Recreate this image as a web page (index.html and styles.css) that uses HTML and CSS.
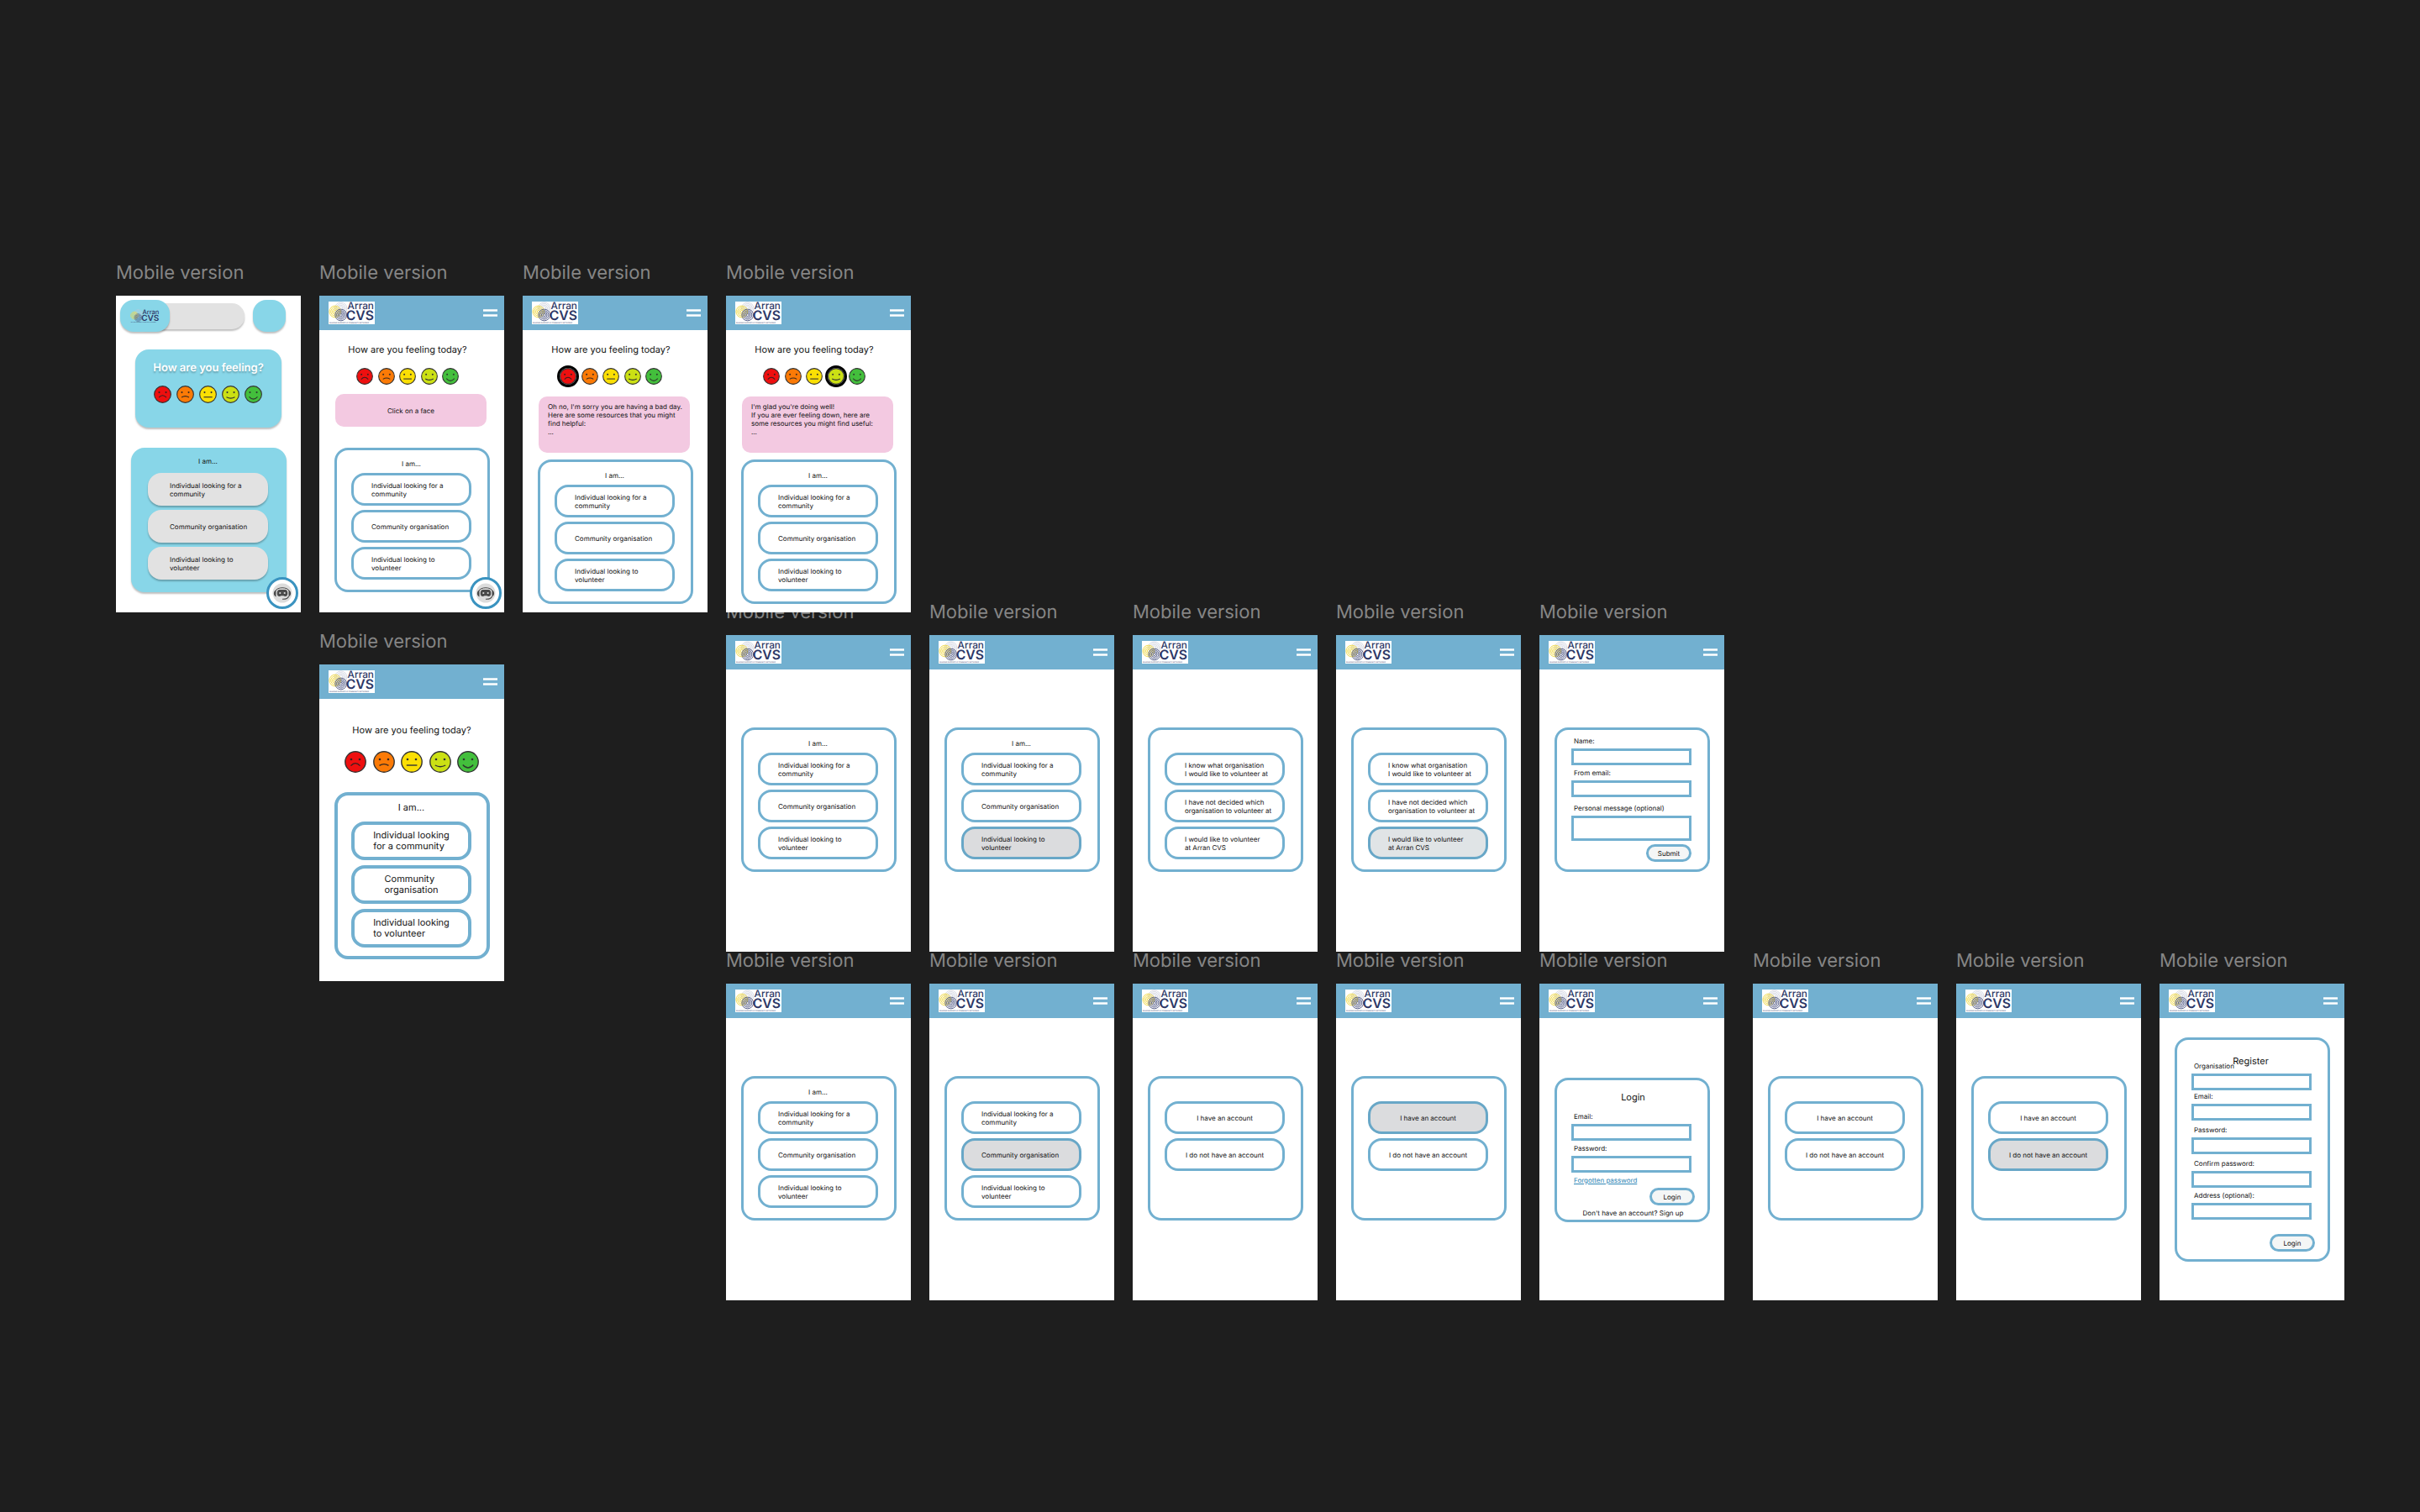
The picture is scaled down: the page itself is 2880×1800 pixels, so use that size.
FILE: index.html
```html
<!DOCTYPE html>
<html lang="en">
<head>
<meta charset="utf-8">
<meta name="viewport" content="width=device-width, initial-scale=1">
<title>Arran CVS – mobile version boards</title>
<link rel="stylesheet" href="styles.css">
</head>
<body>
<svg class="sprite" aria-hidden="true">
  <symbol id="logo" viewBox="0 0 56 27">
    <g fill="none" stroke="#c3c8d8" stroke-width="0.7">
      <circle cx="15" cy="8" r="7.3"/><circle cx="15" cy="8" r="5.6"/><circle cx="15" cy="8" r="3.9"/><circle cx="15" cy="8" r="2.2"/>
    </g>
    <g fill="none" stroke="#f0d94a" stroke-width="1">
      <circle cx="8" cy="12" r="7"/><circle cx="8" cy="12" r="5.2"/><circle cx="8" cy="12" r="3.4"/><circle cx="8" cy="12" r="1.6"/>
    </g>
    <g fill="none" stroke="#47507f" stroke-width="0.9">
      <circle cx="15" cy="16" r="7"/><circle cx="15" cy="16" r="5.2"/><circle cx="15" cy="16" r="3.4"/><circle cx="15" cy="16" r="1.6"/>
    </g>
    <text class="logo-top" x="23" y="9">Arran</text>
    <text class="logo-main" x="21" y="22">CVS</text>
    <text class="logo-tag" x="1" y="26">BUILDING SUPPORTIVE COMMUNITY NETWORKS</text>
  </symbol>
  <symbol id="menu" viewBox="0 0 17 9">
    <path d="M0 1.5H17M0 7.5H17" stroke="#fff" stroke-width="2.6"/>
  </symbol>
  <g id="eyes"><circle cx="8" cy="10" r="1.3"/><circle cx="18" cy="10" r="1.3"/></g>
  <symbol id="face-1" viewBox="0 0 26 26">
    <circle cx="13" cy="13" r="12.2" fill="#ee0f0f" stroke="#333" stroke-width="1.4"/><use href="#eyes" fill="#3a2020"/>
    <path d="M7.5 17.6Q13 11.6 18.5 17.6" fill="none" stroke="#3a2020" stroke-width="1.4"/>
  </symbol>
  <symbol id="face-2" viewBox="0 0 26 26">
    <circle cx="13" cy="13" r="12.2" fill="#fb7a06" stroke="#333" stroke-width="1.4"/><use href="#eyes" fill="#3a2a20"/>
    <path d="M7.5 17.4Q13 13.8 18.5 17.4" fill="none" stroke="#3a2a20" stroke-width="1.4"/>
  </symbol>
  <symbol id="face-3" viewBox="0 0 26 26">
    <circle cx="13" cy="13" r="12.2" fill="#fbdf04" stroke="#333" stroke-width="1.4"/><use href="#eyes" fill="#333"/>
    <path d="M6.8 17H19.4" fill="none" stroke="#333" stroke-width="1.4"/>
  </symbol>
  <symbol id="face-4" viewBox="0 0 26 26">
    <circle cx="13" cy="13" r="12.2" fill="#cbe014" stroke="#333" stroke-width="1.4"/><use href="#eyes" fill="#333"/>
    <path d="M6.8 17Q13 20.4 19.2 17" fill="none" stroke="#333" stroke-width="1.4"/>
  </symbol>
  <symbol id="face-5" viewBox="0 0 26 26">
    <circle cx="13" cy="13" r="12.2" fill="#43bf3c" stroke="#333" stroke-width="1.4"/><use href="#eyes" fill="#2c3a2c"/>
    <path d="M6.8 16.5Q13 23.5 19.2 16.5" fill="none" stroke="#2c3a2c" stroke-width="1.4"/>
  </symbol>
  <symbol id="bot" viewBox="0 0 24 24">
    <circle cx="12" cy="12" r="11.5" fill="#dcdcdc"/>
    <path d="M4 9.5C5.5 4.5 18.5 4.5 20 9.5" fill="none" stroke="#4a4a4a" stroke-width="1"/>
    <path d="M4.5 8.6V16.4C1 15.5 1 9.5 4.5 8.6ZM19.5 8.6V16.4C23 15.5 23 9.5 19.5 8.6Z" fill="#4a4a4a"/>
    <path d="M8.5 8H15.5Q18 8 18.3 12Q18.3 16 15.5 16Q14 16 13.5 15.2H10.5Q10 16 8.5 16Q5.7 16 5.7 12Q6 8 8.5 8Z" fill="#4a4a4a"/>
    <circle cx="9.3" cy="12" r="1.1" fill="#dcdcdc"/><circle cx="14.7" cy="12" r="1.1" fill="#dcdcdc"/>
    <path d="M19.5 16Q18.5 19.5 12 19.3" fill="none" stroke="#4a4a4a" stroke-width="1.1"/>
  </symbol>
</svg>

<main class="canvas">

  <article class="board row-1 col-1">
    <h2 class="board-name">Mobile version</h2>
    <div class="screen screen-draft">
      <header class="draft-bar">
        <button class="draft-logo" type="button" aria-label="Arran CVS home"><svg class="logo-small"><use href="#logo"/></svg></button>
        <div class="draft-search"></div>
        <button class="draft-menu" type="button" aria-label="Menu"></button>
      </header>
      <section class="draft-mood">
        <h3 class="draft-title">How are you feeling?</h3>
        <div class="faces faces-draft">
          <button class="face" type="button" aria-label="Very sad"><svg><use href="#face-1"/></svg></button>
          <button class="face" type="button" aria-label="Sad"><svg><use href="#face-2"/></svg></button>
          <button class="face" type="button" aria-label="Neutral"><svg><use href="#face-3"/></svg></button>
          <button class="face" type="button" aria-label="Happy"><svg><use href="#face-4"/></svg></button>
          <button class="face" type="button" aria-label="Very happy"><svg><use href="#face-5"/></svg></button>
        </div>
      </section>
      <section class="card card-draft">
        <p class="card-lead">I am...</p>
        <button class="choice" type="button">Individual looking for a<br>community</button>
        <button class="choice" type="button">Community organisation</button>
        <button class="choice" type="button">Individual looking to<br>volunteer</button>
      </section>
      <button class="chat" type="button" aria-label="Chat assistant"><svg><use href="#bot"/></svg></button>
    </div>
  </article>

  <article class="board row-1 col-2">
    <h2 class="board-name">Mobile version</h2>
    <div class="screen">
      <header class="bar"><svg class="logo" role="img" aria-label="Arran CVS"><use href="#logo"/></svg><button class="menu" type="button" aria-label="Menu"><svg><use href="#menu"/></svg></button></header>
      <h3 class="question">How are you feeling today?</h3>
      <div class="faces">
        <button class="face" type="button" aria-label="Very sad"><svg><use href="#face-1"/></svg></button>
        <button class="face" type="button" aria-label="Sad"><svg><use href="#face-2"/></svg></button>
        <button class="face" type="button" aria-label="Neutral"><svg><use href="#face-3"/></svg></button>
        <button class="face" type="button" aria-label="Happy"><svg><use href="#face-4"/></svg></button>
        <button class="face" type="button" aria-label="Very happy"><svg><use href="#face-5"/></svg></button>
      </div>
      <p class="note note-hint">Click on a face</p>
      <section class="card card-hint">
        <p class="card-lead">I am...</p>
        <button class="choice" type="button">Individual looking for a<br>community</button>
        <button class="choice" type="button">Community organisation</button>
        <button class="choice" type="button">Individual looking to<br>volunteer</button>
      </section>
      <button class="chat" type="button" aria-label="Chat assistant"><svg><use href="#bot"/></svg></button>
    </div>
  </article>

  <article class="board row-1 col-3">
    <h2 class="board-name">Mobile version</h2>
    <div class="screen">
      <header class="bar"><svg class="logo" role="img" aria-label="Arran CVS"><use href="#logo"/></svg><button class="menu" type="button" aria-label="Menu"><svg><use href="#menu"/></svg></button></header>
      <h3 class="question">How are you feeling today?</h3>
      <div class="faces">
        <button class="face face-picked" type="button" aria-label="Very sad"><svg><use href="#face-1"/></svg></button>
        <button class="face" type="button" aria-label="Sad"><svg><use href="#face-2"/></svg></button>
        <button class="face" type="button" aria-label="Neutral"><svg><use href="#face-3"/></svg></button>
        <button class="face" type="button" aria-label="Happy"><svg><use href="#face-4"/></svg></button>
        <button class="face" type="button" aria-label="Very happy"><svg><use href="#face-5"/></svg></button>
      </div>
      <p class="note">Oh no, I'm sorry you are having a bad day.<br>Here are some resources that you might<br>find helpful:<br>...</p>
      <section class="card card-reply">
        <p class="card-lead">I am...</p>
        <button class="choice" type="button">Individual looking for a<br>community</button>
        <button class="choice" type="button">Community organisation</button>
        <button class="choice" type="button">Individual looking to<br>volunteer</button>
      </section>
    </div>
  </article>

  <article class="board row-1 col-4">
    <h2 class="board-name">Mobile version</h2>
    <div class="screen">
      <header class="bar"><svg class="logo" role="img" aria-label="Arran CVS"><use href="#logo"/></svg><button class="menu" type="button" aria-label="Menu"><svg><use href="#menu"/></svg></button></header>
      <h3 class="question">How are you feeling today?</h3>
      <div class="faces">
        <button class="face" type="button" aria-label="Very sad"><svg><use href="#face-1"/></svg></button>
        <button class="face" type="button" aria-label="Sad"><svg><use href="#face-2"/></svg></button>
        <button class="face" type="button" aria-label="Neutral"><svg><use href="#face-3"/></svg></button>
        <button class="face face-picked" type="button" aria-label="Happy"><svg><use href="#face-4"/></svg></button>
        <button class="face" type="button" aria-label="Very happy"><svg><use href="#face-5"/></svg></button>
      </div>
      <p class="note">I'm glad you're doing well!<br>If you are ever feeling down, here are<br>some resources you might find useful:<br>...</p>
      <section class="card card-reply">
        <p class="card-lead">I am...</p>
        <button class="choice" type="button">Individual looking for a<br>community</button>
        <button class="choice" type="button">Community organisation</button>
        <button class="choice" type="button">Individual looking to<br>volunteer</button>
      </section>
    </div>
  </article>

  <article class="board row-2 col-2">
    <h2 class="board-name">Mobile version</h2>
    <div class="screen screen-large">
      <header class="bar"><svg class="logo" role="img" aria-label="Arran CVS"><use href="#logo"/></svg><button class="menu" type="button" aria-label="Menu"><svg><use href="#menu"/></svg></button></header>
      <h3 class="question">How are you feeling today?</h3>
      <div class="faces">
        <button class="face" type="button" aria-label="Very sad"><svg><use href="#face-1"/></svg></button>
        <button class="face" type="button" aria-label="Sad"><svg><use href="#face-2"/></svg></button>
        <button class="face" type="button" aria-label="Neutral"><svg><use href="#face-3"/></svg></button>
        <button class="face" type="button" aria-label="Happy"><svg><use href="#face-4"/></svg></button>
        <button class="face" type="button" aria-label="Very happy"><svg><use href="#face-5"/></svg></button>
      </div>
      <section class="card">
        <p class="card-lead">I am...</p>
        <button class="choice" type="button">Individual looking<br>for a community</button>
        <button class="choice" type="button">Community<br>organisation</button>
        <button class="choice" type="button">Individual looking<br>to volunteer</button>
      </section>
    </div>
  </article>

  <article class="board row-3 col-4">
    <h2 class="board-name">Mobile version</h2>
    <div class="screen">
      <header class="bar"><svg class="logo" role="img" aria-label="Arran CVS"><use href="#logo"/></svg><button class="menu" type="button" aria-label="Menu"><svg><use href="#menu"/></svg></button></header>
      <section class="card card-step">
        <p class="card-lead">I am...</p>
        <button class="choice" type="button">Individual looking for a<br>community</button>
        <button class="choice" type="button">Community organisation</button>
        <button class="choice" type="button">Individual looking to<br>volunteer</button>
      </section>
    </div>
  </article>

  <article class="board row-3 col-5">
    <h2 class="board-name">Mobile version</h2>
    <div class="screen">
      <header class="bar"><svg class="logo" role="img" aria-label="Arran CVS"><use href="#logo"/></svg><button class="menu" type="button" aria-label="Menu"><svg><use href="#menu"/></svg></button></header>
      <section class="card card-step">
        <p class="card-lead">I am...</p>
        <button class="choice" type="button">Individual looking for a<br>community</button>
        <button class="choice" type="button">Community organisation</button>
        <button class="choice choice-picked" type="button">Individual looking to<br>volunteer</button>
      </section>
    </div>
  </article>

  <article class="board row-3 col-6">
    <h2 class="board-name">Mobile version</h2>
    <div class="screen">
      <header class="bar"><svg class="logo" role="img" aria-label="Arran CVS"><use href="#logo"/></svg><button class="menu" type="button" aria-label="Menu"><svg><use href="#menu"/></svg></button></header>
      <section class="card card-step">
        <p class="card-lead"></p>
        <button class="choice" type="button">I know what organisation<br>I would like to volunteer at</button>
        <button class="choice" type="button">I have not decided which<br>organisation to volunteer at</button>
        <button class="choice" type="button">I would like to volunteer<br>at Arran CVS</button>
      </section>
    </div>
  </article>

  <article class="board row-3 col-7">
    <h2 class="board-name">Mobile version</h2>
    <div class="screen">
      <header class="bar"><svg class="logo" role="img" aria-label="Arran CVS"><use href="#logo"/></svg><button class="menu" type="button" aria-label="Menu"><svg><use href="#menu"/></svg></button></header>
      <section class="card card-step">
        <p class="card-lead"></p>
        <button class="choice" type="button">I know what organisation<br>I would like to volunteer at</button>
        <button class="choice" type="button">I have not decided which<br>organisation to volunteer at</button>
        <button class="choice choice-hover" type="button">I would like to volunteer<br>at Arran CVS</button>
      </section>
    </div>
  </article>

  <article class="board row-3 col-8">
    <h2 class="board-name">Mobile version</h2>
    <div class="screen">
      <header class="bar"><svg class="logo" role="img" aria-label="Arran CVS"><use href="#logo"/></svg><button class="menu" type="button" aria-label="Menu"><svg><use href="#menu"/></svg></button></header>
      <form class="card card-step form form-message">
        <div class="field"><label for="msg-name">Name:</label><input id="msg-name" type="text"></div>
        <div class="field"><label for="msg-email">From email:</label><input id="msg-email" type="email"></div>
        <div class="field field-apart"><label for="msg-text">Personal message (optional)</label><textarea id="msg-text"></textarea></div>
        <button class="submit" type="button">Submit</button>
      </form>
    </div>
  </article>

  <article class="board row-4 col-4">
    <h2 class="board-name">Mobile version</h2>
    <div class="screen">
      <header class="bar"><svg class="logo" role="img" aria-label="Arran CVS"><use href="#logo"/></svg><button class="menu" type="button" aria-label="Menu"><svg><use href="#menu"/></svg></button></header>
      <section class="card card-step">
        <p class="card-lead">I am...</p>
        <button class="choice" type="button">Individual looking for a<br>community</button>
        <button class="choice" type="button">Community organisation</button>
        <button class="choice" type="button">Individual looking to<br>volunteer</button>
      </section>
    </div>
  </article>

  <article class="board row-4 col-5">
    <h2 class="board-name">Mobile version</h2>
    <div class="screen">
      <header class="bar"><svg class="logo" role="img" aria-label="Arran CVS"><use href="#logo"/></svg><button class="menu" type="button" aria-label="Menu"><svg><use href="#menu"/></svg></button></header>
      <section class="card card-step">
        <p class="card-lead"></p>
        <button class="choice" type="button">Individual looking for a<br>community</button>
        <button class="choice choice-picked" type="button">Community organisation</button>
        <button class="choice" type="button">Individual looking to<br>volunteer</button>
      </section>
    </div>
  </article>

  <article class="board row-4 col-6">
    <h2 class="board-name">Mobile version</h2>
    <div class="screen">
      <header class="bar"><svg class="logo" role="img" aria-label="Arran CVS"><use href="#logo"/></svg><button class="menu" type="button" aria-label="Menu"><svg><use href="#menu"/></svg></button></header>
      <section class="card card-step">
        <p class="card-lead"></p>
        <button class="choice choice-center" type="button">I have an account</button>
        <button class="choice choice-center" type="button">I do not have an account</button>
      </section>
    </div>
  </article>

  <article class="board row-4 col-7">
    <h2 class="board-name">Mobile version</h2>
    <div class="screen">
      <header class="bar"><svg class="logo" role="img" aria-label="Arran CVS"><use href="#logo"/></svg><button class="menu" type="button" aria-label="Menu"><svg><use href="#menu"/></svg></button></header>
      <section class="card card-step">
        <p class="card-lead"></p>
        <button class="choice choice-center choice-picked" type="button">I have an account</button>
        <button class="choice choice-center" type="button">I do not have an account</button>
      </section>
    </div>
  </article>

  <article class="board row-4 col-8">
    <h2 class="board-name">Mobile version</h2>
    <div class="screen">
      <header class="bar"><svg class="logo" role="img" aria-label="Arran CVS"><use href="#logo"/></svg><button class="menu" type="button" aria-label="Menu"><svg><use href="#menu"/></svg></button></header>
      <form class="card form form-login">
        <h3 class="form-title">Login</h3>
        <div class="field"><label for="login-email">Email:</label><input id="login-email" type="email"></div>
        <div class="field"><label for="login-pass">Password:</label><input id="login-pass" type="password"></div>
        <a class="forgot" href="#forgotten">Forgotten password</a>
        <button class="submit" type="button">Login</button>
        <p class="signup">Don't have an account? <a href="#register">Sign up</a></p>
      </form>
    </div>
  </article>

  <article class="board row-4 col-9">
    <h2 class="board-name">Mobile version</h2>
    <div class="screen">
      <header class="bar"><svg class="logo" role="img" aria-label="Arran CVS"><use href="#logo"/></svg><button class="menu" type="button" aria-label="Menu"><svg><use href="#menu"/></svg></button></header>
      <section class="card card-step">
        <p class="card-lead"></p>
        <button class="choice choice-center" type="button">I have an account</button>
        <button class="choice choice-center" type="button">I do not have an account</button>
      </section>
    </div>
  </article>

  <article class="board row-4 col-10">
    <h2 class="board-name">Mobile version</h2>
    <div class="screen">
      <header class="bar"><svg class="logo" role="img" aria-label="Arran CVS"><use href="#logo"/></svg><button class="menu" type="button" aria-label="Menu"><svg><use href="#menu"/></svg></button></header>
      <section class="card card-step">
        <p class="card-lead"></p>
        <button class="choice choice-center" type="button">I have an account</button>
        <button class="choice choice-center choice-picked" type="button">I do not have an account</button>
      </section>
    </div>
  </article>

  <article class="board row-4 col-11">
    <h2 class="board-name">Mobile version</h2>
    <div class="screen">
      <header class="bar"><svg class="logo" role="img" aria-label="Arran CVS"><use href="#logo"/></svg><button class="menu" type="button" aria-label="Menu"><svg><use href="#menu"/></svg></button></header>
      <form class="card form form-register">
        <h3 class="form-title">Register</h3>
        <div class="field"><label for="reg-org">Organisation</label><input id="reg-org" type="text"></div>
        <div class="field field-near"><label for="reg-email">Email:</label><input id="reg-email" type="email"></div>
        <div class="field field-apart"><label for="reg-pass">Password:</label><input id="reg-pass" type="password"></div>
        <div class="field field-apart"><label for="reg-confirm">Confirm password:</label><input id="reg-confirm" type="password"></div>
        <div class="field"><label for="reg-address">Address (optional):</label><input id="reg-address" type="text"></div>
        <button class="submit" type="button">Login</button>
      </form>
    </div>
  </article>

</main>
</body>
</html>
```
FILE: styles.css
```css
:root {
  --blue: #72b0d0;
  --cyan: #88d6e8;
  --pink: #f3c9e1;
  --grey: #e2e2e2;
  --ink: #111;
}

* { box-sizing: border-box; }

body {
  margin: 0;
  background: #1e1e1e;
  color: var(--ink);
  font-family: Inter, "Liberation Sans", sans-serif;
  font-size: 8px;
  line-height: 10px;
  text-rendering: geometricPrecision;
}

h2, h3, p { margin: 0; font-weight: 400; }

button, input, textarea {
  margin: 0;
  padding: 0;
  border: 0;
  background: none;
  color: inherit;
  font: inherit;
  text-rendering: inherit;
}

.sprite { display: none; }

/* Free canvas with the boards placed on it */
.canvas { position: relative; min-height: 100vh; }
.board { position: absolute; width: 220px; }

.row-1 { top: 311px; }
.row-2 { top: 750px; }
.row-3 { top: 715px; }
.row-4 { top: 1130px; }

.col-1 { left: 138px; }
.col-2 { left: 380px; }
.col-3 { left: 622px; }
.col-4 { left: 864px; }
.col-5 { left: 1106px; }
.col-6 { left: 1348px; }
.col-7 { left: 1590px; }
.col-8 { left: 1832px; }
.col-9 { left: 2086px; }
.col-10 { left: 2328px; }
.col-11 { left: 2570px; }

.board-name {
  margin-bottom: 13px;
  color: #868686;
  font-size: 22px;
  line-height: 28px;
}

.screen {
  position: relative;
  z-index: 1;
  height: 377px;
  background: #fff;
}

/* Header bar */
.bar {
  display: flex;
  align-items: center;
  justify-content: space-between;
  height: 41px;
  padding: 0 8px 0 11px;
  background: var(--blue);
}
.logo { width: 55px; height: 27px; background: #fff; }
.logo-top { font-family: Inter, sans-serif; font-size: 12px; font-weight: 500; fill: #2c3766; }
.logo-main { font-family: Inter, sans-serif; font-size: 16px; font-weight: 600; fill: #2c3766; }
.logo-tag { font-family: Inter, sans-serif; font-size: 2px; fill: #2c3766; }
.menu { display: flex; }
.menu svg { width: 17px; height: 9px; }

/* Mood question */
.question {
  padding: 17px 10px 15px 0;
  font-size: 11px;
  line-height: 13px;
  text-align: center;
}
.faces {
  display: flex;
  justify-content: space-between;
  width: 122px;
  margin-left: 44px;
}
.face { display: flex; border-radius: 50%; }
.face svg { width: 20px; height: 20px; }
.face-picked { outline: 3px solid #000; }

.note {
  width: 180px;
  height: 67px;
  margin: 14px 0 0 19px;
  padding: 7px 0 0 11px;
  border-radius: 10px;
  background: var(--pink);
}
.note-hint {
  height: 39px;
  margin-top: 11px;
  padding: 15px 0 0;
  text-align: center;
}

/* Choice card */
.card {
  display: flex;
  flex-direction: column;
  gap: 5px;
  width: 185px;
  height: 172px;
  margin-left: 18px;
  padding: 11px 19px 0 17px;
  border: 3px solid var(--blue);
  border-radius: 16px;
}
.card-hint { margin-top: 25px; }
.card-reply { margin-top: 8px; }
.card-step { margin-top: 69px; }
.card-lead { height: 11px; text-align: center; }

.choice {
  height: 39px;
  padding-left: 21px;
  border: 3px solid var(--blue);
  border-radius: 16px;
  text-align: left;
}
.choice-center { padding: 0; text-align: center; }
.choice-picked { border-color: #68a7c7; background: #dbdcde; }
.choice-hover { border-color: #68a7c7; background: #e0e4e6; }

.chat {
  position: absolute;
  right: 3px;
  bottom: 4px;
  display: flex;
  align-items: center;
  justify-content: center;
  width: 38px;
  height: 38px;
  border: 3px solid #3a93c0;
  border-radius: 50%;
  background: #fff;
}
.chat svg { width: 24px; height: 24px; }

/* Large-type variant */
.screen-large { font-size: 11px; line-height: 13px; }
.screen-large .question { padding: 31px 0 18px; }
.screen-large .faces { width: 160px; margin-left: 30px; }
.screen-large .face svg { width: 26px; height: 26px; }
.screen-large .card {
  gap: 6px;
  height: 199px;
  margin-top: 23px;
  padding: 8px 18px 0 16px;
  border-width: 4px;
}
.screen-large .card-lead { height: 17px; }
.screen-large .choice {
  display: flex;
  align-items: center;
  justify-content: center;
  height: 46px;
  padding: 0;
  border-width: 4px;
}

/* First draft of the home screen */
.draft-bar { display: flex; align-items: center; padding: 5px 18px 0 5px; }
.draft-logo, .draft-menu, .draft-search, .draft-mood, .card-draft, .card-draft .choice {
  box-shadow: 0 2px 2px rgba(0, 0, 0, 0.25);
}
.draft-logo {
  position: relative;
  z-index: 1;
  display: flex;
  align-items: center;
  justify-content: center;
  width: 59px;
  height: 38px;
  border-radius: 16px;
  background: var(--cyan);
}
.logo-small { width: 35px; height: 17px; }
.draft-search {
  width: 120px;
  height: 31px;
  margin-left: -31px;
  border-radius: 0 15px 15px 0;
  background: var(--grey);
}
.draft-menu { width: 39px; height: 38px; margin-left: auto; border-radius: 16px; background: var(--cyan); }
.draft-mood {
  width: 174px;
  height: 93px;
  margin: 21px 0 0 23px;
  padding-top: 14px;
  border-radius: 16px;
  background: var(--cyan);
}
.draft-title {
  color: #fff;
  font-size: 13px;
  font-weight: 600;
  line-height: 16px;
  text-align: center;
  text-shadow: 0 2px 2px rgba(0, 0, 0, 0.25);
}
.faces-draft { width: 129px; margin: 13px 0 0 22px; }
.faces-draft .face svg { width: 21px; height: 21px; }
.card-draft { margin-top: 24px; padding-top: 8px; border-color: var(--cyan); background: var(--cyan); }
.card-draft .card-lead { height: 14px; }
.card-draft .choice { padding-left: 23px; border-color: var(--grey); background: var(--grey); }

/* Forms */
.field { display: flex; flex-direction: column; gap: 4px; }
.field label { padding-left: 3px; }
.field input, .field textarea {
  width: 143px;
  height: 20px;
  border: 3px solid var(--blue);
  background: #fff;
}
.field textarea { height: 30px; resize: none; }
.submit {
  align-self: flex-end;
  width: 54px;
  height: 21px;
  border: 3px solid var(--blue);
  border-radius: 11px;
  background: #f4f6f6;
}
.form { gap: 4px; padding: 8px 15px 0 17px; }
.form .field-apart { margin-top: 4px; }
.form-message { padding-right: 19px; }
.form-title { font-size: 11px; line-height: 13px; text-align: center; }

.form-login { margin-top: 71px; padding-top: 14px; }
.form-login .form-title { margin-bottom: 7px; }
.forgot { align-self: flex-start; margin-left: 3px; color: #2f86b5; }
.signup { text-align: center; }
.signup a { color: inherit; text-decoration: none; }

.form-register { height: 267px; margin-top: 23px; padding-top: 19px; }
.form-register .form-title { margin-bottom: -10px; padding-right: 6px; }
.form-register .field-near { margin-top: -2px; }
.form-register .field-apart { margin-top: 2px; }
.form-register .submit { margin-top: 13px; }
```
